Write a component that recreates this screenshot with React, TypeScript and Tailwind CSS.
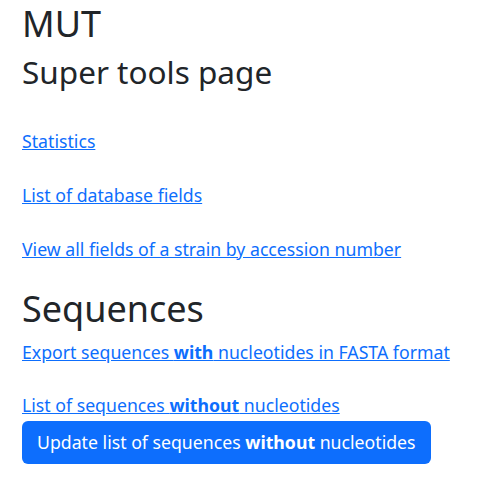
export default function App() {
  const font = { fontFamily: '"Noto Sans", "Open Sans", sans-serif' };
  const link = 'text-[#0d6efd] underline text-[17.7px] leading-[26.4px] w-fit';

  return (
    <div className="min-h-screen bg-white text-[#212529] px-[22px] pt-[2px]" style={font}>
      <h1 className="text-[36px] leading-[1.2] font-normal">MUT</h1>
      <h2 className="text-[31.5px] leading-[1.2] font-normal mt-[8px]">Super tools page</h2>

      <div className="flex flex-col mt-[37px] gap-[27.5px]">
        <a href="#" className={link}>Statistics</a>
        <a href="#" className={link}>List of database fields</a>
        <a href="#" className={link}>View all fields of a strain by accession number</a>
      </div>

      <h1 className="text-[36px] leading-[1.2] font-normal mt-[25px]">Sequences</h1>

      <div className="flex flex-col mt-[9px] gap-[26px]">
        <a href="#" className={link}>
          Export sequences <b>with</b> nucleotides in FASTA format
        </a>
        <a href="#" className={link}>
          List of sequences <b>without</b> nucleotides
        </a>
      </div>

      <button className="mt-[3px] block bg-[#0d6efd] text-white text-[17.7px] leading-[26.4px] px-[15px] py-[8px] rounded-md">
        Update list of sequences <b>without</b> nucleotides
      </button>
    </div>
  );
}
